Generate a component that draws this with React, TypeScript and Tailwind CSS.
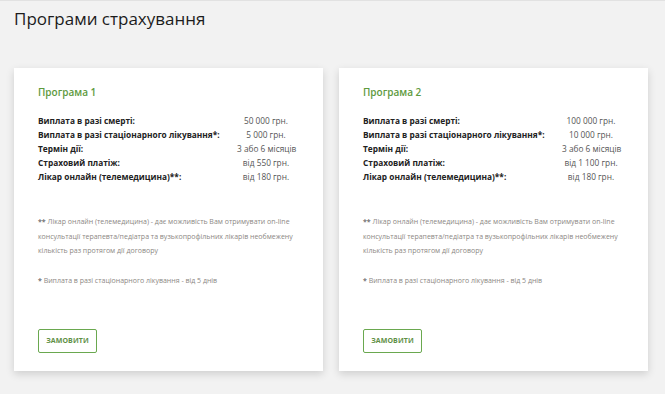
const programs = [
  {
    name: "Програма 1",
    rows: [
      ["Виплата в разі смерті:", "50 000 грн."],
      ["Виплата в разі стаціонарного лікування*:", "5 000 грн."],
      ["Термін дії:", "3 або 6 місяців"],
      ["Страховий платіж:", "від 550 грн."],
      ["Лікар онлайн (телемедицина)**:", "від 180 грн."],
    ],
  },
  {
    name: "Програма 2",
    rows: [
      ["Виплата в разі смерті:", "100 000 грн."],
      ["Виплата в разі стаціонарного лікування*:", "10 000 грн."],
      ["Термін дії:", "3 або 6 місяців"],
      ["Страховий платіж:", "від 1 100 грн."],
      ["Лікар онлайн (телемедицина)**:", "від 180 грн."],
    ],
  },
];

function ProgramCard({ name, rows }: { name: string; rows: string[][] }) {
  return (
    <div className="w-[309px] h-[303px] bg-white shadow-[0_3px_8px_rgba(0,0,0,0.15)] pl-[24px] pr-[14px] pt-[17px] flex flex-col">
      <h2 className="text-[10px] leading-[15px] font-semibold text-[#5e9a3e]">{name}</h2>

      {/* Rows */}
      <div className="mt-[14px] grid grid-cols-[199px_58px] text-[8.3px] leading-[14px] text-[#222]">
        {rows.map(([label, value]) => (
          <div key={label} className="contents">
            <span className="font-bold whitespace-nowrap">{label}</span>
            <span className="text-center text-[#555] whitespace-nowrap">{value}</span>
          </div>
        ))}
      </div>

      {/* Footnotes */}
      <p className="mt-[31px] text-[7px] leading-[14.5px] text-[#8c8784]">
        <b className="text-[#777]">**</b> Лікар онлайн (телемедицина) - дає можливість Вам отримувати on-line
        консультації терапевта/педіатра та вузькопрофільних лікарів необмежену кількість раз протягом дії договору
      </p>
      <p className="mt-[15px] text-[7px] leading-[14.5px] text-[#8c8784]">
        <b className="text-[#777]">*</b> Виплата в разі стаціонарного лікування - від 5 днів
      </p>

      <button
        type="button"
        className="mt-auto mb-[18px] w-[59px] h-[24px] border border-[#6aa84f] rounded-[2px] text-[7px] font-bold text-[#5e8f45] tracking-[0.1px]"
      >
        ЗАМОВИТИ
      </button>
    </div>
  );
}

export default function App() {
  return (
    <div
      className="w-[665px] h-[394px] bg-[#f2f2f2] border-t border-[#e2e2e2] px-[14px] pt-[5px]"
      style={{ fontFamily: '"Open Sans", "Noto Sans", sans-serif' }}
    >
      <h1 className="text-[17px] leading-[26px] font-medium text-[#1c1c1c]">Програми страхування</h1>
      <div className="mt-[36px] flex gap-[16px]">
        {programs.map((p) => (
          <ProgramCard key={p.name} name={p.name} rows={p.rows} />
        ))}
      </div>
    </div>
  );
}
